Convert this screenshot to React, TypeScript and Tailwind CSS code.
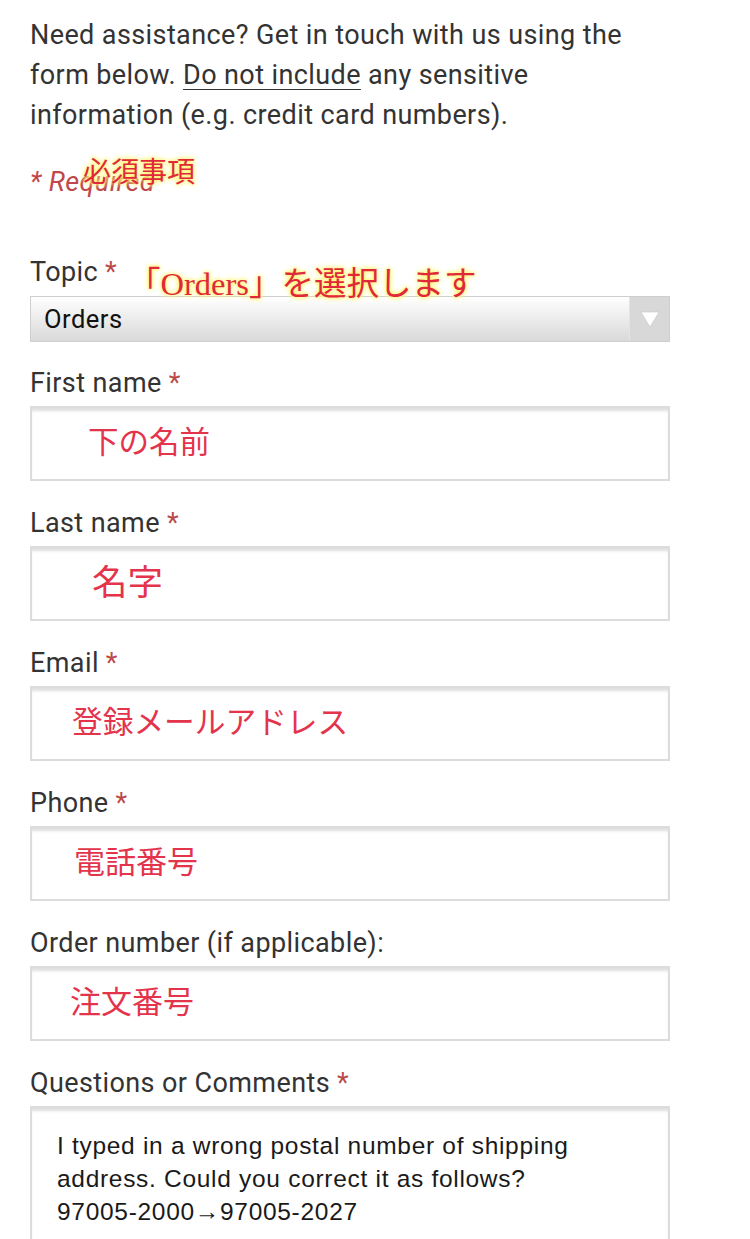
const roboto = { fontFamily: 'Roboto, "Liberation Sans", sans-serif' };
const serifJa = { fontFamily: '"Liberation Serif", "Noto Sans CJK JP", serif' };

function Note({ children, className }: { children: React.ReactNode; className: string }) {
  return (
    <span
      className={`absolute whitespace-nowrap tracking-normal text-[#e0283c] [text-shadow:0_0_3px_#fff36b,0_0_5px_#fff36b,0_0_6px_#fff8a0] ${className}`}
      style={serifJa}
    >
      {children}
    </span>
  );
}

function Label({ text, required = true }: { text: string; required?: boolean }) {
  return (
    <div className="h-10 leading-10 text-[27px] tracking-[0.4px] text-[#333]">
      {text}
      {required && <span className="ml-[7px] text-[#b94a48]">*</span>}
    </div>
  );
}

function Field({ label, value, textClass, gap = 'mt-[22px]', required = true }: { label: string; value: string; textClass: string; gap?: string; required?: boolean }) {
  return (
    <div className={gap}>
      <Label text={label} required={required} />
      <div className="mt-[3px] flex h-[75px] items-center border-2 border-[#dcdcdc] bg-white shadow-[inset_0_4px_3px_-1px_rgba(0,0,0,0.13)]">
        <span className={`text-[#e3344c] ${textClass}`} style={serifJa}>
          {value}
        </span>
      </div>
    </div>
  );
}

export default function App() {
  return (
    <div className="min-h-[1239px] w-[750px] overflow-hidden bg-white px-[30px] pt-[15px]" style={roboto}>
      <p className="w-[700px] text-[27px] leading-10 tracking-[0.4px] text-[#333]">
        Need assistance? Get in touch with us using the
        <br />
        form below. <span className="underline decoration-1 underline-offset-[5px]">Do not include</span> any sensitive
        <br />
        information (e.g. credit card numbers).
      </p>

      <div className="relative mt-[27px] h-10 leading-10 text-[27px] tracking-[0.4px] italic text-[#c0474a]">
        * Required
        <Note className="left-[53px] top-[-5px] text-[28px] not-italic leading-[32px]">必須事項</Note>
      </div>

      <div className="relative mt-[50px]">
        <Label text="Topic" />
        <Note className="left-[98px] top-[15px] text-[32.5px] leading-[34px]">「Orders」を選択します</Note>
        <div className="mt-[4px] flex h-[46px] w-[640px] items-stretch border border-[#cfcfcf] bg-gradient-to-b from-white to-[#d9d9d9]">
          <div className="flex flex-1 items-center pl-[13px] text-[25.5px] tracking-[0.5px] text-[#111]">Orders</div>
          <div className="flex w-[40px] items-center justify-center border-l border-[#e4e4e4] bg-[#d8d8d8]">
            <svg width="20" height="18" viewBox="0 0 20 18">
              <path d="M1 2 L19 2 L10 17 Z" fill="#fff" stroke="#c8c8c8" strokeWidth="0.6" />
            </svg>
          </div>
        </div>
      </div>

      <div className="w-[640px]">
        <Field label="First name" gap="mt-[21px]" value="下の名前" textClass="ml-[56px] text-[30.5px]" />
        <Field label="Last name" value="名字" textClass="ml-[60px] text-[35.5px]" />
        <Field label="Email" value="登録メールアドレス" textClass="ml-[40px] text-[30.7px]" />
        <Field label="Phone" value="電話番号" textClass="ml-[42px] text-[31px]" />
        <Field label="Order number (if applicable):" required={false} value="注文番号" textClass="ml-[38px] text-[31px]" />

        <div className="mt-[22px]">
          <Label text="Questions or Comments" />
          <div
            className="mt-[3px] h-[160px] border-2 border-[#dcdcdc] bg-white px-[25px] pt-[21px] text-[24.5px] leading-[33px] tracking-[0.7px] text-[#1a1a1a] shadow-[inset_0_4px_3px_-1px_rgba(0,0,0,0.13)]"
            style={{ fontFamily: '"Liberation Sans", Arial, sans-serif' }}
          >
            I typed in a wrong postal number of shipping
            <br />
            address. Could you correct it as follows?
            <br />
            97005-2000→97005-2027
          </div>
        </div>
      </div>
    </div>
  );
}
